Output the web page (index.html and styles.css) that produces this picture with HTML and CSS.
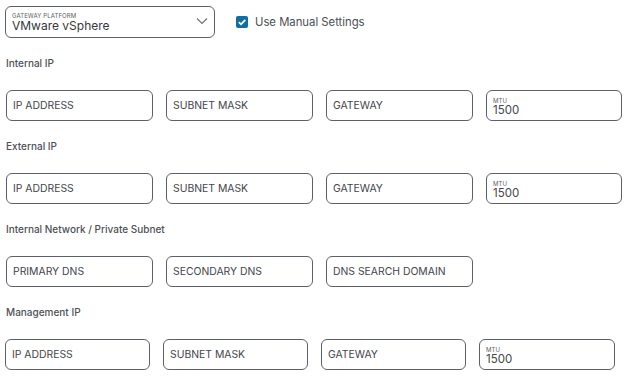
FILE: index.html
```html
<!DOCTYPE html>
<html lang="en">
  <head>
    <meta charset="UTF-8" />
    <meta name="viewport" content="width=device-width, initial-scale=1.0" />
    <title>Gateway Settings</title>
    <link rel="stylesheet" href="styles.css">
  </head>

  <body>
    <div class="top">
      <div class="select">
        <div class="select-text">
          <span class="tiny">GATEWAY PLATFORM</span>
          <span class="value">VMware vSphere</span>
        </div>
        <svg class="chevron" width="12" height="8" viewBox="0 0 12 8">
          <path d="M1 1.5 L6 6.5 L11 1.5" fill="none" stroke="#6b7078" stroke-width="1.1" />
        </svg>
      </div>
      <label class="check">
        <span class="box">
          <svg width="12" height="12" viewBox="0 0 12 12">
            <path d="M2.8 6.2 L5 8.3 L9.3 3.8" fill="none" stroke="#fff" stroke-width="1.8" />
          </svg>
        </span>
        Use Manual Settings
      </label>
    </div>

    <h3 class="title">Internal IP</h3>
    <div class="fields">
      <div class="field">IP ADDRESS</div>
      <div class="field">SUBNET MASK</div>
      <div class="field">GATEWAY</div>
      <div class="field mtu"><span class="tiny">MTU</span><span>1500</span></div>
    </div>

    <h3 class="title">External IP</h3>
    <div class="fields">
      <div class="field">IP ADDRESS</div>
      <div class="field">SUBNET MASK</div>
      <div class="field">GATEWAY</div>
      <div class="field mtu"><span class="tiny">MTU</span><span>1500</span></div>
    </div>

    <h3 class="title">Internal Network / Private Subnet</h3>
    <div class="fields">
      <div class="field">PRIMARY DNS</div>
      <div class="field">SECONDARY DNS</div>
      <div class="field">DNS SEARCH DOMAIN</div>
    </div>

    <h3 class="title">Management IP</h3>
    <div class="fields small">
      <div class="field">IP ADDRESS</div>
      <div class="field">SUBNET MASK</div>
      <div class="field">GATEWAY</div>
      <div class="field mtu"><span class="tiny">MTU</span><span>1500</span></div>
    </div>
  </body>
</html>
```

FILE: styles.css
```css
* {
  margin: 0;
  padding: 0;
  box-sizing: border-box;
  font-family: "Inter", "Liberation Sans", sans-serif;
}

body {
  background: #fff;
  color: #45484d;
  padding: 6px 0 0 6px;
}

.top {
  display: flex;
  align-items: center;
  height: 32px;
}

.select {
  width: 210px;
  height: 32px;
  margin-left: -1px;
  border: 1px solid #5c6169;
  border-radius: 6px;
  padding: 0 6px;
  display: flex;
  align-items: center;
  justify-content: space-between;
}

.select-text {
  display: flex;
  flex-direction: column;
}

.tiny {
  font-size: 6px;
  line-height: 7px;
  color: #5a5e64;
  letter-spacing: 0.1px;
}

.value {
  font-size: 12px;
  line-height: 14px;
  color: #35383d;
}

.chevron {
  margin-top: -2px;
}

.check {
  display: flex;
  align-items: center;
  margin-left: 21px;
  font-size: 11.3px;
  color: #4a4e54;
}

.box {
  width: 12px;
  height: 12px;
  border-radius: 2px;
  background: #0f6fa3;
  margin-right: 7px;
  display: flex;
}

.title {
  font-size: 10px;
  font-weight: 500;
  line-height: 16px;
  color: #4c5056;
  margin: 17px 0 19px;
}

.fields {
  display: flex;
  gap: 13px;
}

.field {
  width: 147px;
  height: 31px;
  border: 1px solid #5c6169;
  border-radius: 6px;
  padding: 0 6px;
  display: flex;
  align-items: center;
  font-size: 10.4px;
  color: #43464b;
}

.field.mtu {
  width: 136px;
  flex-direction: column;
  align-items: flex-start;
  justify-content: center;
  padding-top: 1px;
  font-size: 11.5px;
  line-height: 12px;
}

.fields.small {
  margin-left: -1px;
}

.fields.small .field {
  width: 145px;
}

.fields.small .field.mtu {
  width: 136px;
}
```
